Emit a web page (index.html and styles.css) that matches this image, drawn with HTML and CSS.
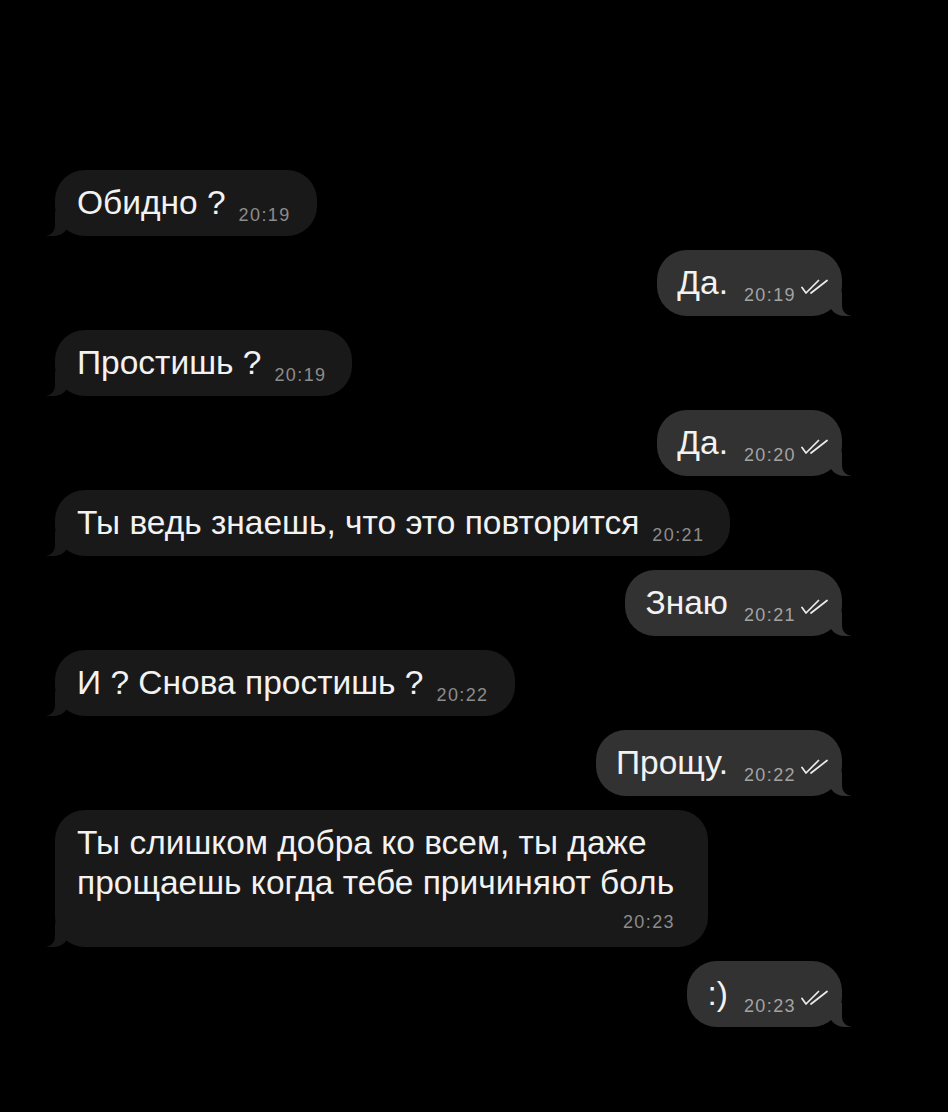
FILE: index.html
```html
<!DOCTYPE html>
<html lang="ru">
<head>
<meta charset="utf-8">
<title>Чат</title>
<link rel="stylesheet" href="styles.css">
</head>
<body>
<main class="chat">
  <div class="msg in"><span class="text">Обидно ?</span><span class="time">20:19</span></div>
  <div class="msg out"><span class="text">Да.</span><span class="time">20:19</span><svg class="ticks" viewBox="0 0 28 16"><path d="M1 8.5 L5 14 L17.5 1.5 M10 14 L26 1.5"/></svg></div>
  <div class="msg in"><span class="text">Простишь ?</span><span class="time">20:19</span></div>
  <div class="msg out"><span class="text">Да.</span><span class="time">20:20</span><svg class="ticks" viewBox="0 0 28 16"><path d="M1 8.5 L5 14 L17.5 1.5 M10 14 L26 1.5"/></svg></div>
  <div class="msg in"><span class="text">Ты ведь знаешь, что это повторится</span><span class="time">20:21</span></div>
  <div class="msg out"><span class="text">Знаю</span><span class="time">20:21</span><svg class="ticks" viewBox="0 0 28 16"><path d="M1 8.5 L5 14 L17.5 1.5 M10 14 L26 1.5"/></svg></div>
  <div class="msg in"><span class="text">И ? Снова простишь ?</span><span class="time">20:22</span></div>
  <div class="msg out"><span class="text">Прощу.</span><span class="time">20:22</span><svg class="ticks" viewBox="0 0 28 16"><path d="M1 8.5 L5 14 L17.5 1.5 M10 14 L26 1.5"/></svg></div>
  <div class="msg in long"><p class="text">Ты слишком добра ко всем, ты даже прощаешь когда тебе причиняют боль</p><span class="time">20:23</span></div>
  <div class="msg out"><span class="text">:)</span><span class="time">20:23</span><svg class="ticks" viewBox="0 0 28 16"><path d="M1 8.5 L5 14 L17.5 1.5 M10 14 L26 1.5"/></svg></div>
</main>
</body>
</html>
```

FILE: styles.css
```css
html, body {
  margin: 0;
  background: #000;
}

body {
  width: 948px;
  height: 1112px;
  overflow: hidden;
  font-family: "Liberation Sans", Arial, sans-serif;
  color: #f2f2f2;
}

.chat {
  display: flex;
  flex-direction: column;
  gap: 14px;
  padding: 170px 106px 0 55px;
}

/* message bubble */
.msg {
  position: relative;
  z-index: 0;
  display: flex;
  align-items: baseline;
  height: 66px;
  box-sizing: border-box;
  padding: 0 26px 0 22px;
  border-radius: 30px;
  line-height: 66px;
}

.msg .text {
  font-size: 33.5px;
  margin: 0;
}

.msg .time {
  font-size: 18px;
  letter-spacing: 1.4px;
  margin-left: 13px;
  position: relative;
  top: 7px;
}

/* incoming */
.msg.in {
  align-self: flex-start;
  background: #191919;
}
.msg.in .time {
  color: #8c8c8c;
}

/* outgoing */
.msg.out {
  align-self: flex-end;
  background: #323232;
  padding: 0 13px 0 20px;
}
.msg.out .time {
  color: #a3a3a3;
  margin-left: 16px;
}

.ticks {
  width: 28px;
  height: 16px;
  margin-left: 5px;
  align-self: center;
  position: relative;
  top: 4px;
  fill: none;
  stroke: #ececec;
  stroke-width: 1.7;
  stroke-linecap: round;
  stroke-linejoin: round;
}

/* bubble tails */
.msg::before,
.msg::after {
  content: "";
  position: absolute;
  bottom: 0;
  height: 24px;
  z-index: -1;
}
.msg.out::before {
  right: -9px;
  width: 22px;
  background: #323232;
  border-bottom-left-radius: 16px 14px;
}
.msg.out::after {
  right: -26px;
  width: 26px;
  background: #000;
  border-bottom-left-radius: 10px;
}
.msg.in::before {
  left: -8px;
  width: 22px;
  background: #191919;
  border-bottom-right-radius: 16px 14px;
}
.msg.in::after {
  left: -26px;
  width: 26px;
  background: #000;
  border-bottom-right-radius: 10px;
}

/* multi-line incoming */
.msg.long {
  display: block;
  height: auto;
  max-width: 653px;
  padding: 13px 18px 12px 22px;
  line-height: 40px;
}
.msg.long .time {
  display: block;
  text-align: right;
  margin: 6px 15px 0 0;
  top: 0;
  line-height: 26px;
}
```
